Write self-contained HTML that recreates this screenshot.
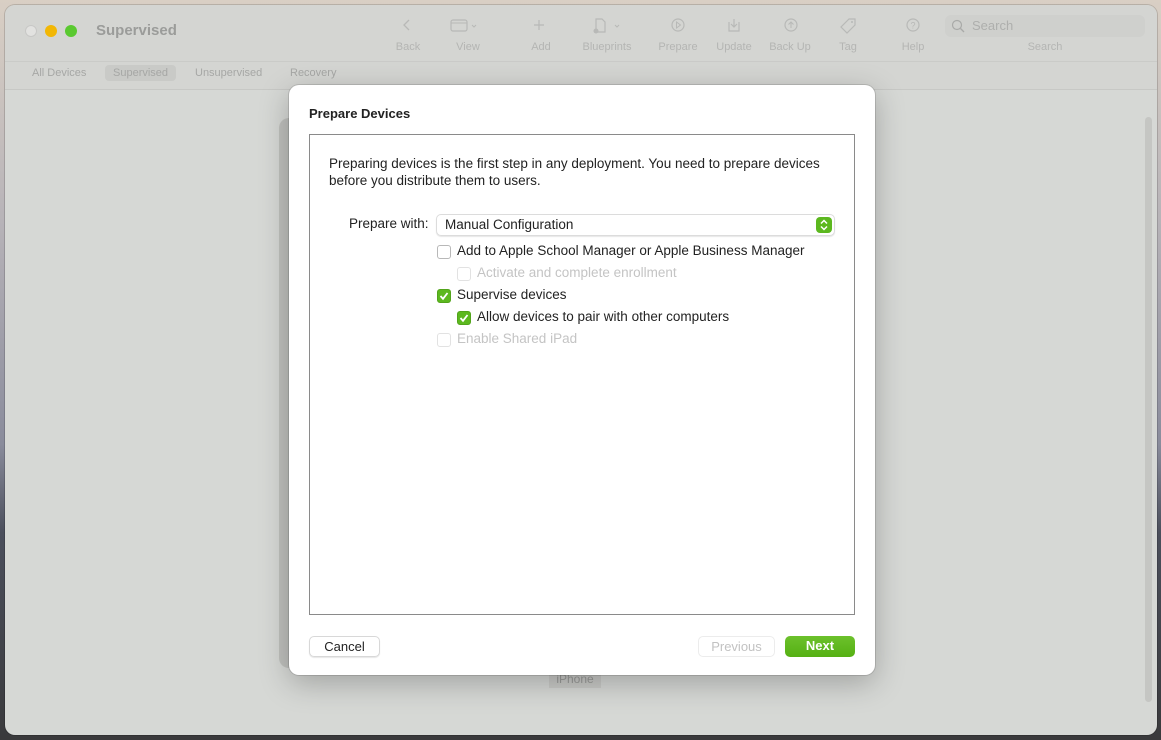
<!DOCTYPE html>
<html><head><meta charset="utf-8"><style>
*{box-sizing:border-box;margin:0;padding:0}
body{width:1161px;height:740px;overflow:hidden;position:relative;font-family:"Liberation Sans",sans-serif;
background:linear-gradient(180deg,#d9cfc4 0%,#b7b3b8 30%,#8a8c9c 60%,#4b4f5c 72%,#3a3a3c 100%)}
.win{position:absolute;left:5px;top:5px;width:1152px;height:730px;border-radius:10px;background:#d6d8d5;overflow:hidden;box-shadow:0 0 0 1px rgba(0,0,0,.15)}
.tb{position:absolute;left:0;top:0;width:100%;height:57px;background:#d4d5d2;border-bottom:1px solid #cacbc8}
.tabs{position:absolute;left:0;top:57px;width:100%;height:28px;background:#d4d5d2;border-bottom:1px solid #c7c8c5}
.dot{position:absolute;top:20px;width:12px;height:12px;border-radius:50%}
.t{position:absolute;font-size:11px;color:#b4b5b3;text-align:center}
.tab{position:absolute;top:60px;font-size:11px;color:#a6a7a5;padding:2px 8px;border-radius:4px}
.ic{position:absolute;top:12px}
.dlg{position:absolute;left:289px;top:85px;width:586px;height:590px;background:#fff;border-radius:10px;box-shadow:0 8px 30px rgba(0,0,0,.25),0 0 0 1px rgba(0,0,0,.12)}
.box{position:absolute;left:20px;top:49px;width:546px;height:481px;border:1px solid #8a8a8a;background:#fff}
.cb{position:absolute;width:14px;height:14px;border:1px solid #b8b8b8;border-radius:3px;background:#fff}
.cb.on{background:#5cb81f;border-color:#52a41b}
.cb.dis{border-color:#e2e2e2}
.lbl{position:absolute;font-size:13.5px;color:#222}
.btn{position:absolute;top:551px;height:21px;border-radius:5px;font-size:13px;text-align:center;line-height:20px}
</style></head><body>
<div class="win">
 <div class="tb"></div><div class="tabs"></div>
 <div class="dot" style="left:20px;background:#e2e2e0;border:1px solid #c8c8c6"></div>
 <div class="dot" style="left:40px;background:#f2b705"></div>
 <div class="dot" style="left:60px;background:#5ac930"></div>
 <div style="position:absolute;left:91px;top:17px;font-size:15px;font-weight:bold;color:#9b9c9a">Supervised</div>
 <svg class="ic" style="left:395px" width="14" height="16"><path d="M9 3 L4 8 L9 13" fill="none" stroke="#b8b9b7" stroke-width="1.3"/></svg>
 <svg class="ic" style="left:445px" width="32" height="16"><rect x="1" y="3" width="16" height="11" rx="2" fill="none" stroke="#b8b9b7" stroke-width="1.2"/><path d="M1 6 H17" stroke="#b8b9b7"/><path d="M22 8 l2 2 l2 -2" fill="none" stroke="#b8b9b7"/></svg>
 <svg class="ic" style="left:527px" width="14" height="16"><path d="M7 3 V13 M2 8 H12" stroke="#b8b9b7" stroke-width="1.2"/></svg>
 <svg class="ic" style="left:587px" width="32" height="18"><path d="M4 2 H10 L13 5 V15 H4 Z" fill="none" stroke="#b8b9b7" stroke-width="1.2"/><circle cx="4" cy="14" r="2.5" fill="#b8b9b7"/><path d="M23 8 l2 2 l2 -2" fill="none" stroke="#b8b9b7"/></svg>
 <svg class="ic" style="left:665px" width="16" height="16"><circle cx="8" cy="8" r="6" fill="none" stroke="#b8b9b7" stroke-width="1.2"/><path d="M6.5 5 L10.5 8 L6.5 11Z" fill="none" stroke="#b8b9b7"/></svg>
 <svg class="ic" style="left:721px" width="16" height="16"><path d="M3 5 V14 H13 V5 M8 2 V10 M5 7 L8 10 L11 7" fill="none" stroke="#b8b9b7" stroke-width="1.2"/></svg>
 <svg class="ic" style="left:778px" width="16" height="16"><circle cx="8" cy="8" r="6" fill="none" stroke="#b8b9b7" stroke-width="1.2"/><path d="M8 11 V5 M5.5 7.5 L8 5 L10.5 7.5" fill="none" stroke="#b8b9b7"/></svg>
 <svg class="ic" style="left:834px" width="18" height="18"><path d="M10 2 H16 V8 L8 16 L2 10 Z" fill="none" stroke="#b8b9b7" stroke-width="1.2"/><circle cx="13" cy="5" r="1" fill="#b8b9b7"/></svg>
 <svg class="ic" style="left:900px" width="16" height="16"><circle cx="8" cy="8" r="6" fill="none" stroke="#b8b9b7" stroke-width="1.2"/><text x="8" y="11.5" font-size="9" text-anchor="middle" fill="#b8b9b7" font-family="Liberation Sans">?</text></svg>
 <div style="position:absolute;left:940px;top:10px;width:200px;height:22px;border-radius:6px;background:#cfd0cd"></div>
 <svg style="position:absolute;left:946px;top:14px" width="14" height="14"><circle cx="6" cy="6" r="4.5" fill="none" stroke="#a9aaa8" stroke-width="1.2"/><path d="M9.5 9.5 L13 13" stroke="#a9aaa8" stroke-width="1.3"/></svg>
 <div style="position:absolute;left:967px;top:13px;font-size:13px;color:#aeafad">Search</div>
 <div class="t" style="left:383px;top:36px;width:40px">Back</div>
 <div class="t" style="left:443px;top:36px;width:40px">View</div>
 <div class="t" style="left:516px;top:36px;width:40px">Add</div>
 <div class="t" style="left:572px;top:36px;width:60px">Blueprints</div>
 <div class="t" style="left:648px;top:36px;width:50px">Prepare</div>
 <div class="t" style="left:704px;top:36px;width:50px">Update</div>
 <div class="t" style="left:760px;top:36px;width:50px">Back Up</div>
 <div class="t" style="left:823px;top:36px;width:40px">Tag</div>
 <div class="t" style="left:888px;top:36px;width:40px">Help</div>
 <div class="t" style="left:1015px;top:36px;width:50px">Search</div>
 <div class="tab" style="left:19px">All Devices</div>
 <div class="tab" style="left:100px;background:#c9cac7">Supervised</div>
 <div class="tab" style="left:182px">Unsupervised</div>
 <div class="tab" style="left:277px">Recovery</div>
 <div style="position:absolute;left:274px;top:113px;width:30px;height:550px;border-radius:10px 0 0 10px;background:#bfc0bd"></div>
 <div style="position:absolute;left:544px;top:665px;width:52px;height:18px;background:#c9cac7;font-size:12px;color:#9a9b99;text-align:center;line-height:18px">iPhone</div>
 <div style="position:absolute;left:1140px;top:112px;width:7px;height:585px;border-radius:4px;background:#c5c6c3"></div>
</div>
<div class="dlg">
 <div style="position:absolute;left:20px;top:21px;font-size:13px;font-weight:bold;color:#222">Prepare Devices</div>
 <div class="box">
  <div style="position:absolute;left:19px;top:20px;font-size:13.5px;line-height:17px;color:#222;width:515px">Preparing devices is the first step in any deployment. You need to prepare devices before you distribute them to users.</div>
  <div class="lbl" style="left:39px;top:81px">Prepare with:</div>
  <div style="position:absolute;left:126px;top:79px;width:399px;height:22px;border-radius:5px;border:1px solid #dcdcdc;box-shadow:0 1px 1px rgba(0,0,0,.1)">
   <div class="lbl" style="left:8px;top:2px">Manual Configuration</div>
   <div style="position:absolute;right:2px;top:2px;width:16px;height:16px;border-radius:4px;background:#5cb81f"><svg width="16" height="16"><path d="M5 6.5 L8 3.5 L11 6.5 M5 9.5 L8 12.5 L11 9.5" fill="none" stroke="#fff" stroke-width="1.5"/></svg></div>
  </div>
  <div class="cb" style="left:127px;top:110px"></div><div class="lbl" style="left:147px;top:108px">Add to Apple School Manager or Apple Business Manager</div>
  <div class="cb dis" style="left:147px;top:132px"></div><div class="lbl" style="left:167px;top:130px;color:#c4c4c4">Activate and complete enrollment</div>
  <div class="cb on" style="left:127px;top:154px"><svg width="12" height="12" style="position:absolute;left:0;top:0"><path d="M2.5 6 L5 8.8 L9.5 3" fill="none" stroke="#fff" stroke-width="1.8"/></svg></div><div class="lbl" style="left:147px;top:152px">Supervise devices</div>
  <div class="cb on" style="left:147px;top:176px"><svg width="12" height="12" style="position:absolute;left:0;top:0"><path d="M2.5 6 L5 8.8 L9.5 3" fill="none" stroke="#fff" stroke-width="1.8"/></svg></div><div class="lbl" style="left:167px;top:174px">Allow devices to pair with other computers</div>
  <div class="cb dis" style="left:127px;top:198px"></div><div class="lbl" style="left:147px;top:196px;color:#c4c4c4">Enable Shared iPad</div>
 </div>
 <div class="btn" style="left:20px;width:71px;border:1px solid #d8d8d8;box-shadow:0 1px 1px rgba(0,0,0,.1);color:#222">Cancel</div>
 <div class="btn" style="left:409px;width:77px;border:1px solid #ececec;color:#c2c2c2">Previous</div>
 <div class="btn" style="left:496px;width:70px;background:linear-gradient(#6cc12c,#55b013);color:#fff;font-weight:bold">Next</div>
</div>
</body></html>
